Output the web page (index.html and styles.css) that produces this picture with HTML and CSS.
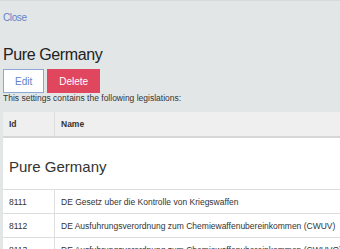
FILE: index.html
```html
<!DOCTYPE html>
<html lang="de">
<head>
    <meta charset="UTF-8" />
    <meta name="viewport" content="width=device-width, initial-scale=1.0"/>
    <title>Pure Germany - Settings</title>
    <link rel="stylesheet" href="styles.css">
</head>
<body>
    <div class="panel">
        <a class="close-link" href="#">Close</a>
        <h1 class="setting-title">Pure Germany</h1>
        <div class="actions">
            <button class="btn btn-edit">Edit</button>
            <button class="btn btn-delete">Delete</button>
        </div>
        <p class="intro">This settings contains the following legislations:</p>

        <table class="legis-table">
            <thead>
                <tr>
                    <th class="col-id">Id</th>
                    <th>Name</th>
                </tr>
            </thead>
            <tbody>
                <tr class="group-row">
                    <td colspan="2">Pure Germany</td>
                </tr>
                <tr>
                    <td class="col-id">8111</td>
                    <td>DE Gesetz uber die Kontrolle von Kriegswaffen</td>
                </tr>
                <tr>
                    <td class="col-id">8112</td>
                    <td>DE Ausfuhrungsverordnung zum Chemiewaffenubereinkommen (CWUV)</td>
                </tr>
                <tr>
                    <td class="col-id">8113</td>
                    <td>DE Ausfuhrungsverordnung zum Chemiewaffenubereinkommen (CWUVO)</td>
                </tr>
            </tbody>
        </table>
    </div>
</body>
</html>
```

FILE: styles.css
```css
:root {
    --page-bg: #e3e6e7;
    --link-color: #5f84c6;
    --danger-color: #e0475e;
    --text-color: #333;
    --line-color: #dedede;
}
html {
    overflow: hidden;
}
body {
    font-family: "Liberation Sans", Arial, sans-serif;
    background-color: var(--page-bg);
    color: var(--text-color);
    margin: 0;
}
.panel {
    border-top: 1px solid #d6dadb;
    padding: 11px 0 0 3px;
}
.close-link {
    display: block;
    font-size: 10px;
    line-height: 12px;
    letter-spacing: -0.4px;
    color: var(--link-color);
    text-decoration: none;
}
.setting-title {
    margin: 21px 0 0;
    font-size: 16px;
    line-height: 20px;
    font-weight: 400;
    letter-spacing: -0.4px;
    color: #222;
}
.actions {
    display: flex;
    gap: 3px;
    margin-top: 4px;
}
.btn {
    font-family: inherit;
    font-size: 10px;
    height: 24px;
    padding: 0 11px;
    border: 1px solid transparent;
    border-radius: 0;
    cursor: pointer;
}
.btn-edit {
    background-color: #fff;
    border-color: #8ea8d6;
    color: var(--link-color);
}
.btn-delete {
    background-color: var(--danger-color);
    border-color: var(--danger-color);
    color: #fff;
}
.intro {
    margin: 0;
    font-size: 8.5px;
    line-height: 10px;
}
.legis-table {
    width: 100%;
    table-layout: fixed;
    margin-top: 9px;
    border-collapse: collapse;
    background-color: #fff;
    font-size: 8.5px;
}
.legis-table th {
    height: 24px;
    padding: 0 6px;
    background-color: #efefef;
    border-bottom: 2px solid #d6d6d6;
    text-align: left;
    font-weight: 700;
}
.legis-table td {
    height: 23px;
    padding: 0 6px;
    border-top: 1px solid var(--line-color);
    white-space: nowrap;
    overflow: hidden;
}
.legis-table .col-id {
    width: 39px;
    border-right: 1px solid var(--line-color);
}
.legis-table .group-row td {
    height: auto;
    border-top: none;
    padding: 20px 6px 13px;
    font-size: 15px;
    line-height: 18px;
}
```
